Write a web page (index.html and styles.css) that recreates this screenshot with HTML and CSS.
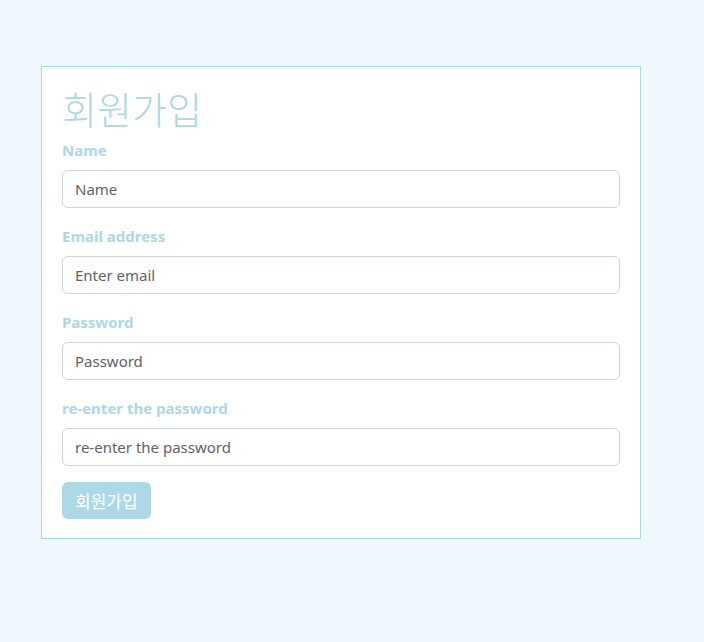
FILE: index.html
```html
<!DOCTYPE html>
<html lang="ko">
<head>
<meta charset="utf-8">
<title>회원가입</title>
<link rel="stylesheet" href="styles.css">
</head>
<body>
<div class="card">
  <h1 class="title">회원가입</h1>
  <form class="form">
    <div class="group">
      <label class="label" for="name">Name</label>
      <input class="input" id="name" type="text" placeholder="Name">
    </div>
    <div class="group">
      <label class="label" for="email">Email address</label>
      <input class="input" id="email" type="email" placeholder="Enter email">
    </div>
    <div class="group">
      <label class="label" for="pw">Password</label>
      <input class="input" id="pw" type="password" placeholder="Password">
    </div>
    <div class="group">
      <label class="label" for="pw2">re-enter the password</label>
      <input class="input" id="pw2" type="password" placeholder="re-enter the password">
    </div>
    <button class="btn" type="button">회원가입</button>
  </form>
</div>
</body>
</html>
```
FILE: styles.css
```css
html, body {
  margin: 0;
  padding: 0;
  background: #f0f8ff;
}
body {
  font-family: "Noto Sans", "Noto Sans CJK KR", sans-serif;
  color: #add8e6;
  padding: 66px 0 0 41px;
  min-height: 642px;
  box-sizing: border-box;
}
.card {
  width: 600px;
  box-sizing: border-box;
  background: #fff;
  border: 1px solid #add8e6;
  padding: 19px 20px 19px;
}
.title {
  font-family: "Noto Sans CJK KR", sans-serif;
  font-weight: 300;
  font-size: 38px;
  line-height: 44px;
  margin: 0 0 8px;
  color: #add8e6;
}
.form {
  display: flex;
  flex-direction: column;
  align-items: flex-start;
}
.group {
  width: 100%;
  margin-bottom: 16px;
}
.label {
  display: block;
  font-weight: 700;
  font-size: 15px;
  line-height: 24px;
  margin-bottom: 8px;
  color: #add8e6;
}
.input {
  display: block;
  width: 100%;
  box-sizing: border-box;
  height: 38px;
  padding: 6px 12px;
  font-family: "Noto Sans", sans-serif;
  font-size: 15px;
  color: #495057;
  border: 1px solid #ced4da;
  border-radius: 6px;
  background: #fff;
}
.input::placeholder {
  color: #5f6368;
  opacity: 1;
}
.btn {
  height: 37px;
  padding: 0 13px;
  border: none;
  border-radius: 6px;
  background: #add8e6;
  color: #fff;
  font-family: "Noto Sans CJK KR", sans-serif;
  font-size: 17px;
}
```
